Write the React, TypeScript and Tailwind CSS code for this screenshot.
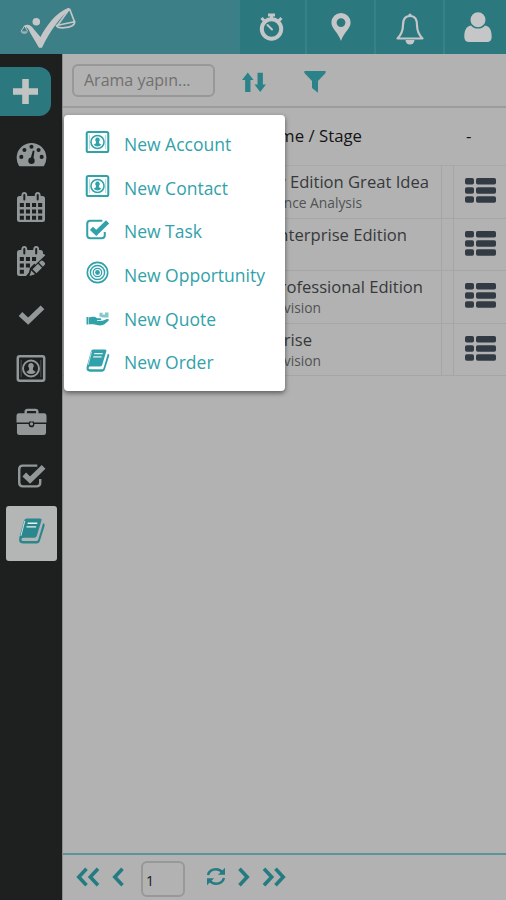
import React from 'react';

type IconProps = { className?: string };

const LogoIcon: React.FC<IconProps> = ({ className }) => (
  <svg className={className} viewBox="0 0 56 42" fill="currentColor">
    <circle cx="16.300" cy="14.700" r="3.800" />
    <path d="M4.500 18.500C8 16.500 11.500 18.500 14 22.500L20.500 30C26.500 18.500 36 5.500 48.500 .8L50 2.500C40 10 30 24 22 40.700H19L10 25.500C8.500 22 7 20 4.500 19.800Z" />
    <path d="M49.500 1.700L36.700 19.500M49.500 1.700L54.600 15" fill="none" stroke="currentColor" strokeWidth="1.700" />
    <path d="M36.500 18.500L54.600 14.700C55 18.500 50 20.500 44.500 20.700C40.500 21 37 20.500 36.500 18.500Z" fill="none" stroke="currentColor" strokeWidth="1.700" />
    <path d="M4.500 18.800L1 24.500M4.500 18.800L7.500 24" fill="none" stroke="currentColor" strokeWidth="1" />
    <path d="M.8 24.200H7.800C7.500 27.500 1.500 27.800 .8 24.200Z" fillOpacity=".7" />
  </svg>
);

const StopwatchIcon: React.FC<IconProps> = ({ className }) => (
  <svg className={className} viewBox="0 0 24 28" fill="none" stroke="currentColor">
    <circle cx="12" cy="16" r="9.700" strokeWidth="4" />
    <path d="M8.500 2H15.500" strokeWidth="3" />
    <path d="M12 2V6M2 5L5 8M22 5L19 8" strokeWidth="3" />
    <path d="M8 12L12.500 16.500" strokeWidth="2" strokeLinecap="round" />
  </svg>
);

const PinIcon: React.FC<IconProps> = ({ className }) => (
  <svg className={className} viewBox="0 0 20 28" fill="currentColor">
    <path fillRule="evenodd" d="M10 0A9.600 9.600 0 0 1 19.600 9.600C19.600 16 13 19 10 28C7 19 .4 16 .4 9.600A9.600 9.600 0 0 1 10 0ZM10 5.200A4.400 4.400 0 1 0 10 14A4.400 4.400 0 1 0 10 5.200Z" />
  </svg>
);

const BellIcon: React.FC<IconProps> = ({ className }) => (
  <svg className={className} viewBox="0 0 30 32">
    <path d="M15 3C9.500 3 8 7 8 12C8 19 6 22 2.500 25.500H27.500C24 22 22 19 22 12C22 7 20.500 3 15 3Z" fill="none" stroke="currentColor" strokeWidth="2.200" strokeLinejoin="round" />
    <path d="M10.500 27H19.500A4.500 4.500 0 0 1 10.500 27Z" fill="currentColor" />
    <circle cx="15" cy="2" r="1.600" fill="currentColor" />
  </svg>
);

const UserIcon: React.FC<IconProps> = ({ className }) => (
  <svg className={className} viewBox="0 0 28 31" fill="currentColor">
    <circle cx="14" cy="7.800" r="7.500" />
    <path d="M7 13.500C9 16 11.500 16.600 14 16.600C16.500 16.600 19 16 21 13.500C26 14 27.700 19 27.700 25C27.700 28 26 30 23 30H5C2 30 .3 28 .3 25C.3 19 2 14 7 13.500Z" />
  </svg>
);

const GaugeIcon: React.FC<IconProps> = ({ className }) => (
  <svg className={className} viewBox="0 0 32 26">
    <path d="M3 25A15.300 15.300 0 1 1 29 25C28.500 25.500 28 25.600 27.500 25.600H4.500C4 25.600 3.500 25.500 3 25Z" fill="currentColor" />
    <g fill="#1d201f">
      <circle cx="5.500" cy="16" r="2.100" />
      <circle cx="8.700" cy="8.800" r="2.100" />
      <circle cx="16" cy="5.500" r="2.100" />
      <circle cx="23.300" cy="8.800" r="2.100" />
      <circle cx="26.500" cy="16" r="2.100" />
      <circle cx="16" cy="20" r="3.300" />
      <path d="M14.700 19L17.400 9.500L19.100 9.900L17.700 20Z" />
    </g>
  </svg>
);

const CalendarIcon: React.FC<IconProps> = ({ className }) => (
  <svg className={className} viewBox="0 0 30 31">
    <path d="M3.500 4H26.500Q29 4 29 6.500V27.500Q29 30 26.500 30H3.500Q1 30 1 27.500V6.500Q1 4 3.500 4Z" fill="currentColor" />
    <path d="M5.300 4Q5.300 0 8.300 0T11.300 4ZM18.700 4Q18.700 0 21.700 0T24.700 4Z" fill="currentColor" />
    <path d="M8.300 3V7.500M21.700 3V7.500" stroke="#1d201f" strokeWidth="2" strokeLinecap="round" />
    <path d="M3.800 13H26.500M3.800 19.400H26.500M3.800 25.700H26.500" stroke="#1d201f" strokeWidth="4" strokeDasharray="4.100 2" />
  </svg>
);

const CalendarEditIcon: React.FC<IconProps> = ({ className }) => (
  <svg className={className} viewBox="0 0 30 31">
    <path d="M3.500 4H24.500Q27 4 27 6.500V10L10 30H3.500Q1 30 1 27.500V6.500Q1 4 3.500 4Z" fill="currentColor" />
    <path d="M5.300 4Q5.300 0 8.300 0T11.300 4ZM17.200 4Q17.200 0 20.200 0T23.200 4Z" fill="currentColor" />
    <path d="M8.300 3V7.500M20.200 3V7.500" stroke="#1d201f" strokeWidth="2" strokeLinecap="round" />
    <path d="M3.800 13H21M3.800 19.400H15M3.800 25.700H8" stroke="#1d201f" strokeWidth="4" strokeDasharray="4.100 2" />
    <path d="M12 31L14 22L27 9L32 14L21 29Z" fill="#1d201f" />
    <path d="M13.500 30L15.300 24.500L19 28.200ZM16.500 23.200L22 17.800L26 21.800L20.500 27.200ZM23 16.800L25 14.800Q26 14 27 15L28.800 16.800Q29.600 17.800 28.800 18.700L26.800 20.800Z" fill="currentColor" />
    <path d="M18.500 18L28.500 8.500" stroke="currentColor" strokeWidth="2.300" />
  </svg>
);

const CheckIcon: React.FC<IconProps> = ({ className }) => (
  <svg className={className} viewBox="0 0 28 22">
    <path d="M2.500 10.500L10.500 18L25.500 3.500" fill="none" stroke="currentColor" strokeWidth="5.500" />
  </svg>
);

const ContactIcon: React.FC<IconProps> = ({ className }) => (
  <svg className={className} viewBox="0 0 30 28" fill="none" stroke="currentColor">
    <rect x="1.300" y="1.300" width="27.400" height="25.400" rx="2" strokeWidth="2.600" />
    <circle cx="15" cy="14" r="8.300" strokeWidth="2" />
    <path d="M15 8.300A2.800 3 0 0 1 17 13.500V15.500L20 17.500Q15 22 10 17.500L13 15.500V13.500A2.800 3 0 0 1 15 8.300Z" fill="currentColor" stroke="none" />
    <path d="M4.800 5V23M25.200 5V23" strokeWidth="1" strokeOpacity=".45" />
  </svg>
);

const BriefcaseIcon: React.FC<IconProps> = ({ className }) => (
  <svg className={className} viewBox="0 0 32 28">
    <path d="M10 6V3.500Q10 1.500 12 1.500H20Q22 1.500 22 3.500V6" fill="none" stroke="currentColor" strokeWidth="2.500" />
    <path d="M3 5H29Q31.500 5 31.500 8V14.500H18.500V13.500H13.500V14.500H.5V8Q.5 5 3 5Z" fill="currentColor" />
    <path d="M1 16H13Q13 19.500 16 19.500T19 16H31V25Q31 27.500 28.500 27.500H3.500Q1 27.500 1 25Z" fill="currentColor" />
    <circle cx="16" cy="16" r="1.700" fill="currentColor" />
  </svg>
);

const TaskIcon: React.FC<IconProps> = ({ className }) => (
  <svg className={className} viewBox="0 0 30 26" fill="none" stroke="currentColor">
    <path d="M21 2.300H6Q2.300 2.300 2.300 6V20Q2.300 23.700 6 23.700H20Q24 23.700 24 20V16" strokeWidth="2.500" />
    <path d="M7.500 11.500L13.500 17.200L27.500 3.500" strokeWidth="5.500" />
  </svg>
);

const BookIcon: React.FC<IconProps> = ({ className }) => (
  <svg className={className} viewBox="0 0 28 27">
    <path d="M8.500 .6H22Q24.500 .6 23.700 3L19 18.500Q18.500 20.500 16.500 20.500H5Q2.800 20.500 3 22.500Q3.200 23.800 5 23.800H19Q20 23.800 20.400 22.700L25.500 5.500Q27.700 6 27 8.500L22 24.500Q21.300 26.600 19 26.600H4.500Q-.5 26.200 .8 20.500L5.500 3.500Q6.200 .6 8.500 .6Z" fill="currentColor" />
    <path d="M9.500 5.500H19.500M8.300 9.200H18.300" stroke="#e9f1f1" strokeWidth="1.500" />
    <path d="M6.500 3L2.500 18.500" stroke="#e9f1f1" strokeWidth=".9" />
  </svg>
);

const TargetIcon: React.FC<IconProps> = ({ className }) => (
  <svg className={className} viewBox="0 0 24 24" fill="none" stroke="currentColor">
    <circle cx="12" cy="12" r="10.600" strokeWidth="1.700" />
    <circle cx="12" cy="12" r="7.400" strokeWidth="1.500" />
    <circle cx="12" cy="12" r="4.400" strokeWidth="1.300" />
    <circle cx="12" cy="12" r="2.500" fill="currentColor" stroke="none" />
  </svg>
);

const QuoteIcon: React.FC<IconProps> = ({ className }) => (
  <svg className={className} viewBox="0 0 24 24" fill="currentColor">
    <path d="M.5 12H2.500V19.500H.5ZM3 12.500C6 11.500 9 11.500 11 13.300H14.500Q16 13.800 15 15H11V15.700H16.500L21 14Q23.800 13.500 22.500 15.700L18.500 19.300Q16.500 20.800 12 20.300L7.500 19.200H3Z" />
    <path d="M13.500 7.800H16.500V9.500H19V7.500H22.500V12.500H16.500L13.500 11.500Z" fillOpacity=".6" />
  </svg>
);

const SortIcon: React.FC<IconProps> = ({ className }) => (
  <svg className={className} viewBox="0 0 26 22" fill="currentColor">
    <path d="M6.500 .5L12.500 8.500H9.300V21H3.700V8.500H.5ZM19.500 21L25.500 13H22.300V.8H16.700V13H13.500Z" />
  </svg>
);

const FilterIcon: React.FC<IconProps> = ({ className }) => (
  <svg className={className} viewBox="0 0 22 22" fill="currentColor">
    <path d="M.4 0H21.600V2L14 10V21.800L8 17V10L.4 2Z" />
  </svg>
);

const ListIcon: React.FC<IconProps> = ({ className }) => (
  <svg className={className} viewBox="0 0 31 25" fill="currentColor">
    <rect y="0" width="9" height="6.600" rx="1.800" />
    <rect x="11" y="0" width="20" height="6.600" rx="1.800" />
    <rect y="9.200" width="9" height="6.600" rx="1.800" />
    <rect x="11" y="9.200" width="20" height="6.600" rx="1.800" />
    <rect y="18.200" width="9" height="6.600" rx="1.800" />
    <rect x="11" y="18.200" width="20" height="6.600" rx="1.800" />
  </svg>
);

const ChevronIcon: React.FC<IconProps & { double?: boolean }> = ({ className, double }) => (
  <svg className={className} viewBox={double ? '0 0 24 20' : '0 0 12 20'} fill="none" stroke="currentColor" strokeWidth="3.600">
    <path d="M10.500 1.800L2.800 10L10.500 18.200" />
    {double && <path d="M22 1.800L14.300 10L22 18.200" />}
  </svg>
);

const RefreshIcon: React.FC<IconProps> = ({ className }) => (
  <svg className={className} viewBox="0 0 20 19">
    <path d="M2 8Q3.500 2.300 10 2.300Q14 2.300 16.500 5.500M18 11Q16.500 16.700 10 16.700Q6 16.700 3.500 13.500" fill="none" stroke="currentColor" strokeWidth="2.500" />
    <path d="M19 .8V7.800H12ZM1 18.200V11.200H8Z" fill="currentColor" />
  </svg>
);

const topItems = [
  { id: 'timer', icon: StopwatchIcon, cell: 'w-[67px]', size: 'w-[25px] h-[28px] mr-[2px]' },
  { id: 'location', icon: PinIcon, cell: 'w-[69px]', size: 'w-[20px] h-[28px]' },
  { id: 'alerts', icon: BellIcon, cell: 'w-[69px]', size: 'w-[30px] h-[32px] mt-[3px]' },
  { id: 'profile', icon: UserIcon, cell: 'w-[63px]', size: 'w-[28px] h-[31px] ml-[4px]' },
];

const sideItems = [
  { id: 'dashboard', icon: GaugeIcon, size: 'w-[31px] h-[26px]' },
  { id: 'calendar', icon: CalendarIcon, size: 'w-[30px] h-[31px]' },
  { id: 'planning', icon: CalendarEditIcon, size: 'w-[30px] h-[31px]' },
  { id: 'done', icon: CheckIcon, size: 'w-[27px] h-[21px]' },
  { id: 'contacts', icon: ContactIcon, size: 'w-[30px] h-[27px]' },
  { id: 'business', icon: BriefcaseIcon, size: 'w-[31px] h-[28px]' },
  { id: 'tasks', icon: TaskIcon, size: 'w-[29px] h-[26px]' },
];

const menuItems = [
  { label: 'New Account', icon: ContactIcon, size: 'w-[25px] h-[22px]' },
  { label: 'New Contact', icon: ContactIcon, size: 'w-[25px] h-[22px]' },
  { label: 'New Task', icon: TaskIcon, size: 'w-[25px] h-[21px]' },
  { label: 'New Opportunity', icon: TargetIcon, size: 'w-[23px] h-[23px]' },
  { label: 'New Quote', icon: QuoteIcon, size: 'w-[24px] h-[24px]' },
  { label: 'New Order', icon: BookIcon, size: 'w-[24px] h-[23px]' },
];

const rows = [
  { name: 'y Edition Great Idea', stage: 'nce Analysis', nameWidth: 'w-[366px]', stageWidth: 'w-[299px]' },
  { name: 'Enterprise Edition', stage: '', nameWidth: 'w-[344px]', stageWidth: 'w-[299px]' },
  { name: 'Professional Edition', stage: 'vision', nameWidth: 'w-[360px]', stageWidth: 'w-[258px]' },
  { name: 'rise', stage: 'vision', nameWidth: 'w-[249px]', stageWidth: 'w-[258px]' },
];

const Header = () => (
  <header className="flex h-[54px] shrink-0 justify-between bg-[#3c7f86] text-[#c5c6c7]">
    <LogoIcon className="ml-[20px] mt-[7px] h-[42px] w-[56px]" />
    <div className="flex bg-[#2b787f]">
      {topItems.map((item) => (
        <button key={item.id} className={`flex items-center justify-center border-l-2 border-[#37828a] ${item.cell}`}>
          <item.icon className={item.size} />
        </button>
      ))}
    </div>
  </header>
);

const Sidebar = () => (
  <aside className="w-[62px] shrink-0 bg-[#1d201f] pt-[13px] text-[#929798]">
    <button className="flex h-[49px] w-[51px] items-center rounded-r-[12px] bg-[#2b787f] pl-[13px] text-[#c2c3c3]">
      <svg className="h-[25px] w-[25px]" viewBox="0 0 25 25" fill="currentColor">
        <path d="M9.200 0H15.800V9.200H25V15.800H15.800V25H9.200V15.800H0V9.200H9.200Z" />
      </svg>
    </button>
    <nav className="mt-[11px] flex flex-col">
      {sideItems.map((item) => (
        <button key={item.id} className="flex h-[53.700px] items-center justify-center">
          <item.icon className={item.size} />
        </button>
      ))}
    </nav>
    <button className="ml-[6px] mt-[3px] flex h-[55px] w-[51px] items-center justify-center rounded-[3px] bg-[#b4b5b5] pb-[4px] text-[#2b878e]">
      <BookIcon className="h-[26px] w-[28px]" />
    </button>
  </aside>
);

const NewMenu = () => (
  <div className="absolute left-[64px] top-[115px] h-[276px] w-[221px] rounded-[4px] bg-white pt-[7px] shadow-[0_2px_5px_rgba(0,0,0,0.5)]">
    {menuItems.map((item) => (
      <button key={item.label} className="flex h-[43.700px] w-full items-center pl-[21px] text-[#32a2aa]">
        <span className="mb-[4px] flex w-[25px] justify-center">
          <item.icon className={item.size} />
        </span>
        <span className="ml-[14px] whitespace-nowrap text-[17.500px] leading-6">{item.label}</span>
      </button>
    ))}
  </div>
);

const Toolbar = () => (
  <div className="flex h-[54px] items-center border-b-2 border-[#9c9c9c] pl-[9px] text-[#2b8289]">
    <input
      className="h-[33px] w-[143px] rounded-[6px] border-2 border-[#989898] bg-transparent px-[10px] pt-0 pb-[1px] text-[16px] text-[#707070] placeholder:text-[#707070]"
      placeholder="Arama yapın..."
    />
    <SortIcon className="ml-[26px] mt-[4px] h-[21px] w-[26px]" />
    <FilterIcon className="ml-[37px] mt-[4px] h-[22px] w-[22px]" />
  </div>
);

const Table = () => (
  <div className="flex-1">
    <div className="flex h-[58px] items-center border-b border-[#a9a9a9] pb-[2px] text-[16.800px] text-[#141414]">
      <div className="w-[299px] shrink-0 text-right">Name / Stage</div>
      <div className="ml-[104px]">-</div>
    </div>
    {rows.map((row) => (
      <div key={row.name} className="flex h-[52.500px] border-b border-[#a6a6a6]">
        <div className="w-[379px] shrink-0 whitespace-nowrap border-r border-[#a6a6a6] pt-[4px] text-right">
          <div className={`text-[16.600px] leading-[24px] text-[#36393b] ${row.nameWidth}`}>{row.name}</div>
          <div className={`text-[13.800px] leading-[18px] text-[#505354] ${row.stageWidth}`}>{row.stage}</div>
        </div>
        <div className="w-[12px] border-r border-[#a6a6a6]" />
        <div className="pl-[11px] pt-[12px] text-[#323b43]">
          <ListIcon className="h-[25px] w-[31px]" />
        </div>
      </div>
    ))}
  </div>
);

const Pager = () => (
  <div className="flex h-[47px] items-center border-t-2 border-[#5d9497] pb-[2px] pl-[13px] text-[#247c82]">
    <ChevronIcon double className="h-[20px] w-[24px]" />
    <ChevronIcon className="ml-[12px] h-[20px] w-[12px]" />
    <input
      className="ml-[17px] mt-[4px] h-[36px] w-[44px] rounded-[6px] border-2 border-[#989898] bg-transparent pl-[3px] pt-[3px] text-[14px] text-[#171717]"
      defaultValue="1"
    />
    <RefreshIcon className="ml-[21px] h-[19px] w-[20px]" />
    <ChevronIcon className="ml-[12px] h-[20px] w-[12px] rotate-180" />
    <ChevronIcon double className="ml-[12px] h-[20px] w-[24px] rotate-180" />
  </div>
);

const App: React.FC = () => {
  return (
    <div className="relative flex h-[900px] w-[506px] flex-col overflow-hidden bg-[#b2b2b2] font-['Open_Sans','Noto_Sans',sans-serif]">
      <Header />
      <div className="flex min-h-0 flex-1">
        <Sidebar />
        <main className="flex min-w-0 flex-1 flex-col border-l border-[#8e8e8e]">
          <Toolbar />
          <Table />
          <Pager />
        </main>
      </div>
      <NewMenu />
    </div>
  );
};

export default App;
